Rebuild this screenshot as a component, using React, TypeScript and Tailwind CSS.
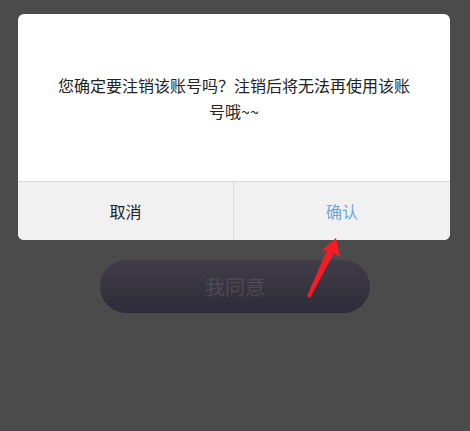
const font = { fontFamily: '"Noto Sans CJK SC", "Noto Sans", sans-serif' }

function Arrow() {
  return (
    <svg
      className="pointer-events-none absolute left-0 top-0"
      width="470"
      height="431"
      viewBox="0 0 470 431"
    >
      <polygon
        points="336,238 340,257 334,253 310,298 307,296 327,250 320,252"
        fill="#f51c24"
      />
    </svg>
  )
}

export default function App() {
  return (
    <div
      className="relative h-[431px] w-[470px] overflow-hidden bg-[#4b4b4b] px-[18px] pt-[14px]"
      style={font}
    >
      <div className="flex h-[226px] w-[432px] flex-col overflow-hidden rounded-[6px] bg-white">
        <div className="flex h-[167px] items-center justify-center px-[34px]">
          <p className="text-center text-[16px] leading-[26px] text-[#222]">
            您确定要注销该账号吗？注销后将无法再使用该账号哦~~
          </p>
        </div>
        <div className="grid flex-1 grid-cols-2 border-t border-[#d9d9d9] bg-[#f1f1f1]">
          <button className="border-r border-[#dcdcdc] text-[16px] text-[#222]">取消</button>
          <button className="text-[16px] text-[#6aa6e0]">确认</button>
        </div>
      </div>
      <div className="mt-[20px] flex justify-center">
        <div className="flex h-[53px] w-[270px] items-center justify-center rounded-full bg-gradient-to-b from-[#403d49] to-[#2f2c39] text-[20px] text-[#4d4a55]">
          我同意
        </div>
      </div>
      <Arrow />
    </div>
  )
}
